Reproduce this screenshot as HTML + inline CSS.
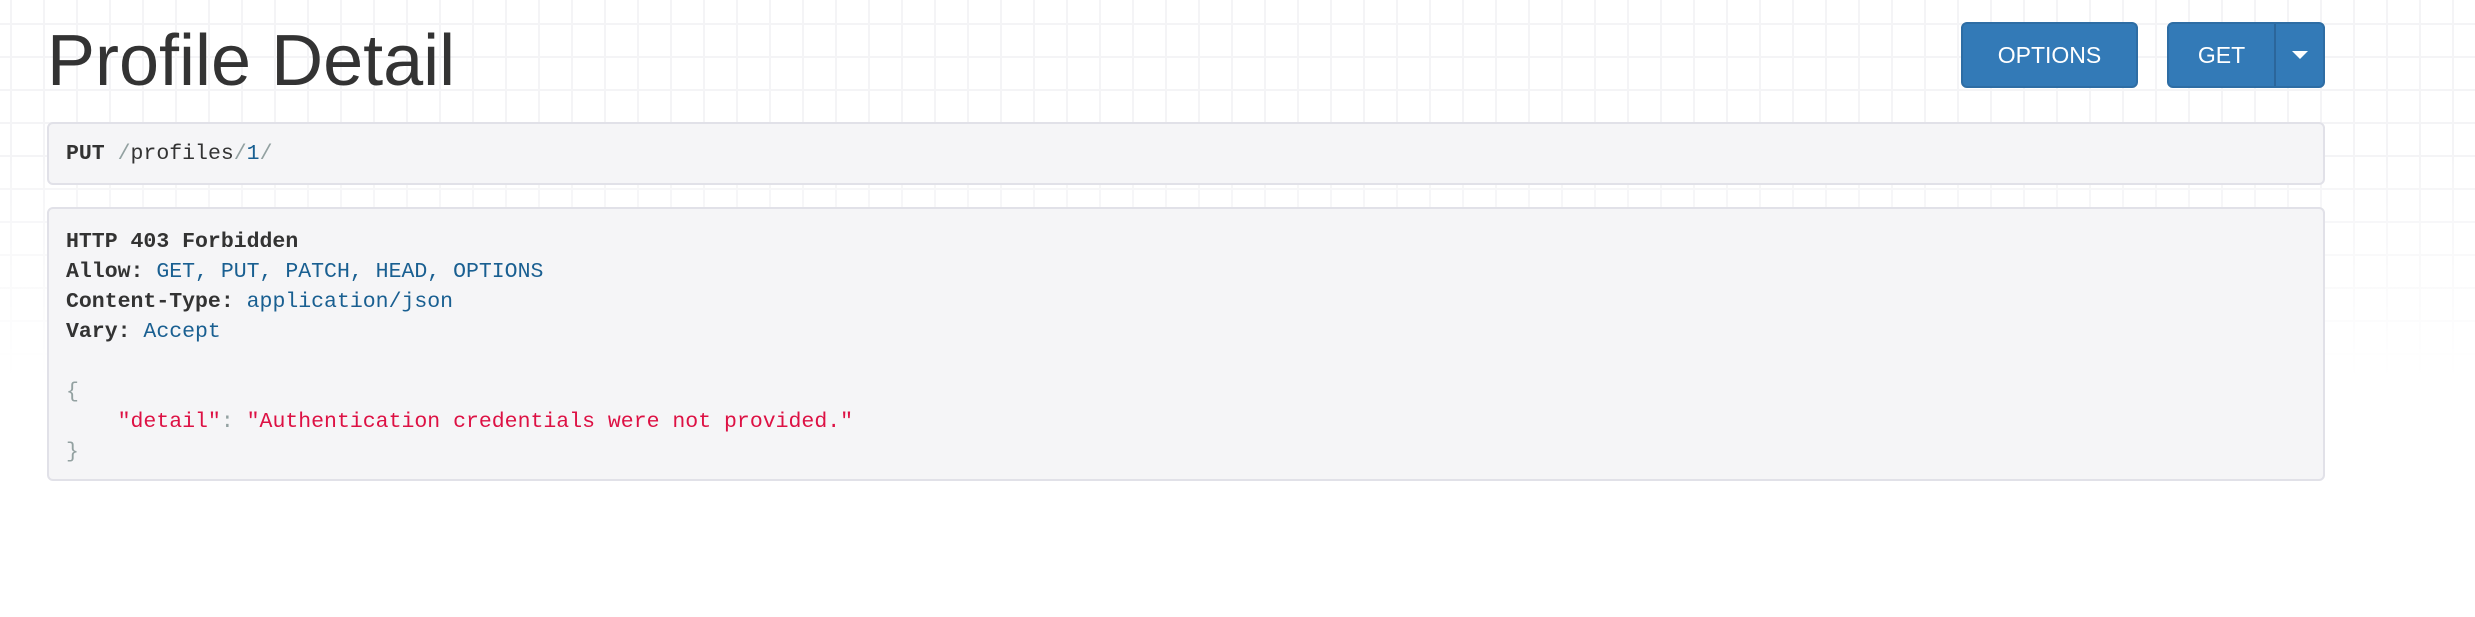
<!DOCTYPE html>
<html><head><meta charset="utf-8"><style>
html,body{margin:0;padding:0;width:2475px;height:617px;overflow:hidden;background:#fff;
background-image:linear-gradient(to bottom,rgba(255,255,255,0) 0,rgba(255,255,255,0) 150px,#fff 380px),
linear-gradient(#f4f4f6 2px,transparent 2px),linear-gradient(90deg,#f4f4f6 2px,transparent 2px);
background-size:100% 100%,33px 33px,33px 33px;background-position:0 0,0 -10px,10px 0;}
h1{position:absolute;left:47px;top:22px;margin:0;font:72px/1.1 "Liberation Sans",sans-serif;color:#333;letter-spacing:0}
.btn{position:absolute;top:22px;height:66px;background:#337ab7;border:2px solid #2e6da4;border-radius:6px;box-sizing:border-box;color:#fff;font:23px "Liberation Sans",sans-serif;display:flex;align-items:center;justify-content:center}
.box{position:absolute;left:47px;width:2278px;background:#f5f5f7;border:2px solid #e1e1e8;border-radius:6px;box-sizing:border-box;font:21.5px/30px "Liberation Mono",monospace;color:#333;padding-left:17px}
b{font-weight:bold}
.lit{color:#195f91}.str{color:#dd1144}.pun{color:#93a1a1}
</style></head><body>
<h1>Profile Detail</h1>
<div class="btn" style="left:1961px;width:177px">OPTIONS</div>
<div class="btn" style="left:2167px;width:158px;justify-content:flex-start">
<span style="width:105px;text-align:center">GET</span>
<span style="width:2px;height:62px;background:#2b669b"></span>
<span style="flex:1;display:flex;justify-content:center"><span style="width:0;height:0;border-left:8px solid transparent;border-right:8px solid transparent;border-top:8px solid #fff"></span></span>
</div>
<div class="box" style="top:122px;height:63px;padding-top:15px"><b>PUT</b> <span class="pun">/</span>profiles<span class="pun">/</span><span class="lit">1</span><span class="pun">/</span></div>
<div class="box" style="top:207px;height:274px;padding-top:18px;white-space:pre"><b>HTTP 403 Forbidden</b>
<b>Allow:</b> <span class="lit">GET, PUT, PATCH, HEAD, OPTIONS</span>
<b>Content-Type:</b> <span class="lit">application/json</span>
<b>Vary:</b> <span class="lit">Accept</span>

<span class="pun">{</span>
    <span class="str">"detail"</span><span class="pun">:</span> <span class="str">"Authentication credentials were not provided."</span>
<span class="pun">}</span></div>
</body></html>
